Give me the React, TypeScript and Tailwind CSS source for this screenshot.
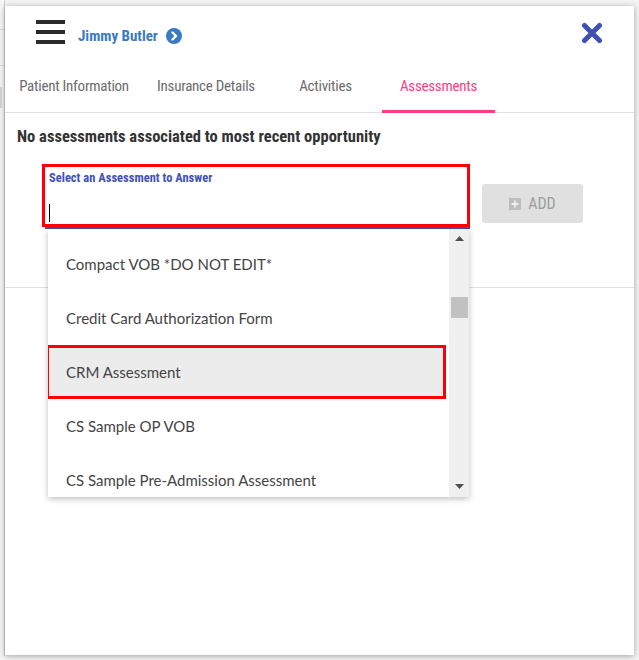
import React from 'react';

const narrow = { fontFamily: '"Liberation Sans Narrow", "Roboto Condensed", Roboto, sans-serif' };

const items = [
  'Compact VOB *DO NOT EDIT*',
  'Credit Card Authorization Form',
  'CRM Assessment',
  'CS Sample OP VOB',
  'CS Sample Pre-Admission Assessment',
];

const tabs = [
  { label: 'Patient Information', w: 'w-[138px]' },
  { label: 'Insurance Details', w: 'w-[126px]' },
  { label: 'Activities', w: 'w-[113px]' },
  { label: 'Assessments', w: 'w-[113px]', active: true },
];

const App: React.FC = () => {
  return (
    <div className="flex w-[639px] h-[660px] bg-[#f4f4f4] overflow-hidden">
      {/* page behind the drawer */}
      <div className="w-[5px] h-[656px] shrink-0 border-r border-[#cfcfcf] bg-[#f6f6f6] flex flex-col">
        <div className="h-[30px] border-b border-[#dcdcdc]" />
        <div className="h-[36px] border-b border-[#dcdcdc]" />
        <div className="mt-[21px] h-[21px] w-[2px] bg-[#d6d6d6]" />
      </div>

      {/* drawer panel */}
      <div className="relative mt-[6px] w-[629px] h-[649px] shrink-0 bg-white shadow-[0_1px_6px_rgba(0,0,0,0.35)]">
        {/* header */}
        <div className="h-[58px] flex items-start pt-[14px] pl-[31px]">
          <div className="flex flex-col gap-[6px] w-[29px]">
            <div className="h-[4px] bg-[#2b2b2b]" />
            <div className="h-[4px] bg-[#2b2b2b]" />
            <div className="h-[4px] bg-[#2b2b2b]" />
          </div>
          <div className="ml-[13px] mt-[7px] flex items-center gap-[8px]">
            <span style={narrow} className="text-[15px] font-bold text-[#3a7bbf] leading-[18px]">
              Jimmy Butler
            </span>
            <svg width="16" height="16" viewBox="0 0 16 16">
              <circle cx="8" cy="8" r="8" fill="#3a7bbf" />
              <path d="M6.5 4.5 L10 8 L6.5 11.5" fill="none" stroke="#fff" strokeWidth="2.4" strokeLinecap="round" strokeLinejoin="round" />
            </svg>
          </div>
          <svg className="absolute left-[576px] top-[16px]" width="22" height="22" viewBox="0 0 22 22">
            <path d="M3.5 3.5 L18.5 18.5 M18.5 3.5 L3.5 18.5" stroke="#3f51b5" strokeWidth="5" strokeLinecap="round" />
          </svg>
        </div>

        {/* tabs */}
        <div className="flex h-[49px] border-b border-[#e0e0e0]">
          {tabs.map((t) => (
            <div
              key={t.label}
              style={narrow}
              className={`relative ${t.w} flex items-center justify-center pb-[4px] text-[15px] tracking-[-0.25px] ${
                t.active ? 'text-[#ff3d7f]' : 'text-[#6b6b6b]'
              }`}
            >
              {t.label}
              {t.active && <div className="absolute left-0 right-0 bottom-[-1px] h-[3px] bg-[#ff3d7f]" />}
            </div>
          ))}
        </div>

        {/* content */}
        <div className="relative">
          <div style={narrow} className="pl-[12px] pt-[14px] text-[16.5px] font-bold text-[#333] leading-[20px]">
            No assessments associated to most recent opportunity
          </div>

          <div className="flex items-start pl-[37px] mt-[17px]">
            <div className="w-[428px]">
              <div className="h-[63px] border-[3px] border-[#ff0000] px-[4px] pt-[4px]">
                <div style={narrow} className="text-[12.5px] font-bold text-[#3f51b5] leading-[14px]">
                  Select an Assessment to Answer
                </div>
                <div className="mt-[19px] w-px h-[18px] bg-black" />
              </div>
              <div className="ml-[3px] h-[2px] bg-[#3f51b5]" />
            </div>
            <div className="ml-[12px] mt-[20px] w-[101px] h-[39px] rounded-[3px] bg-[#e0e0e0] flex items-center justify-center gap-[7px]">
              <div className="w-[12px] h-[12px] bg-[#bdbdbd] flex items-center justify-center">
                <svg width="8" height="8" viewBox="0 0 8 8">
                  <path d="M4 0.5 V7.5 M0.5 4 H7.5" stroke="#eee" strokeWidth="1.8" />
                </svg>
              </div>
              <span style={narrow} className="text-[16px] text-[#9e9e9e]">ADD</span>
            </div>
          </div>

          <div className="mt-[58px] border-b border-[#e0e0e0]" />

          {/* dropdown list */}
          <div className="absolute left-[43px] top-[116px] w-[421px] h-[268px] bg-white shadow-[0_2px_6px_rgba(0,0,0,0.25)] flex overflow-hidden">
            <div className="flex-1 pt-[8px]">
              {items.map((it) => {
                const sel = it === 'CRM Assessment';
                return (
                  <div
                    key={it}
                    style={{ fontFamily: 'Lato, "Open Sans", sans-serif' }}
                    className={`h-[54px] flex items-center text-[15px] text-[#444] shrink-0 ${
                      sel ? 'bg-[#ececec] border-[3px] border-[#ff0000] -ml-[2px] pl-[17px] mr-[3px]' : 'pl-[18px]'
                    }`}
                  >
                    {it}
                  </div>
                );
              })}
            </div>
            <div className="w-[20px] bg-[#f0f0f0] flex flex-col items-center">
              <svg className="mt-[7px]" width="9" height="5" viewBox="0 0 9 5">
                <path d="M0 5 L4.5 0 L9 5 Z" fill="#505050" />
              </svg>
              <div className="mt-[56px] w-[17px] h-[21px] bg-[#c1c1c1]" />
              <div className="flex-1" />
              <svg className="mb-[8px]" width="9" height="5" viewBox="0 0 9 5">
                <path d="M0 0 L9 0 L4.5 5 Z" fill="#505050" />
              </svg>
            </div>
          </div>
        </div>
      </div>
    </div>
  );
};

export default App;
